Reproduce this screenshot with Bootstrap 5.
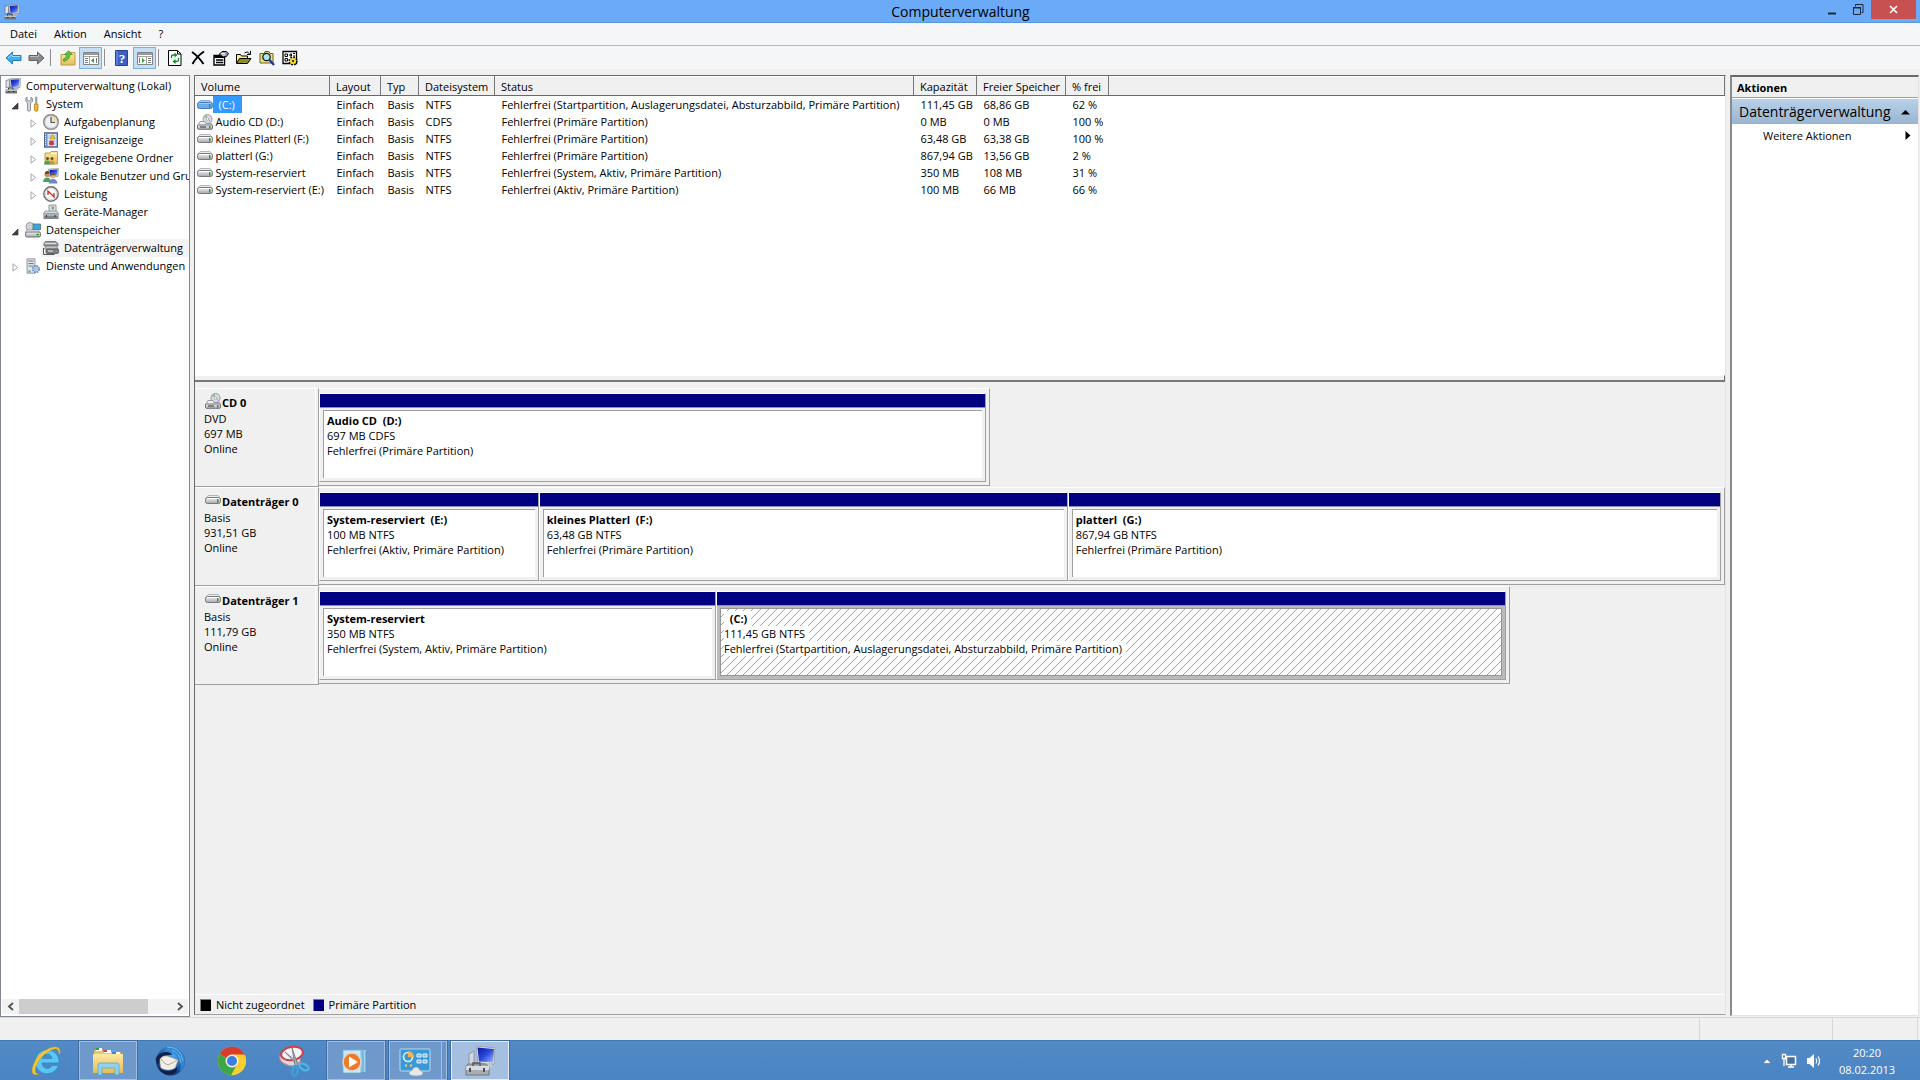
<!DOCTYPE html>
<html lang="de">
<head>
<meta charset="utf-8">
<meta name="viewport" content="width=device-width, initial-scale=1">
<title>Computerverwaltung</title>
<link href="https://cdn.jsdelivr.net/npm/bootstrap@5.3.0/dist/css/bootstrap.min.css" rel="stylesheet">
<style>
  body { font-family: "Open Sans", "Noto Sans", sans-serif; font-size: 11px; line-height: 15px; color: #000; background: #f0f0f0; }
  button { font: inherit; color: inherit; background: none; border: 0; padding: 0; }
  svg { display: block; flex: none; }
  .ico { width: 16px; height: 16px; }

  /* window frame */
  .title-bar { height: 23px; background: #6aaaf6; border-bottom: 1px solid #5a96dc; }
  .title-bar h1 { font-size: 14px; line-height: 23px; font-weight: 400; padding-left: 82px; }
  .win-btn { width: 26px; height: 19px; display: flex; align-items: center; justify-content: center; }
  .win-close { width: 45px; background: #c75050; }
  .menu-bar { height: 23px; background: #f5f6f7; border-bottom: 1px solid #b4b6b8; padding: 0 10px 2px; gap: 17px; }
  .tool-bar { height: 23px; background: #f5f6f7; padding-left: 2px; }
  .tool-btn { width: 23px; height: 22px; display: flex; align-items: center; justify-content: center; }
  .tool-on { background: #c4def5; border: 1px solid #7eb0dd; }
  .tool-sep { width: 8px; height: 20px; }
  .tool-sep::before { content: ""; display: block; width: 1px; height: 17px; margin-left: 2px; background: #8d8d8d; }
  .tool-sep-end { width: 7px; }

  .work { padding: 6px 1px 0 0; }
  .tree-pane { width: 190px; background: #fff; border: 1px solid #828790; }
  .mid-pane { margin: 0 0 2px 4px; border: 1px solid #696969; border-right-color: #e3e3e3; border-bottom-color: #a0a0a0; }
  .act-pane { width: 189px; margin: 0 0 1px 4px; background: #fff; border: 2px solid #8a8a8a; border-top-color: #696969; border-right: 1px solid #e3e3e3; border-bottom: 1px solid #e3e3e3; }

  /* tree */
  .tree-list { list-style: none; margin: 0; padding: 1px 0 0; }
  .tree-row { height: 18px; display: flex; align-items: center; white-space: nowrap; width: 100%; color: #000; text-decoration: none; }
  .tree-row .lbl { padding: 0 5px; line-height: 18px; }
  .tree-row .twist { width: 8px; height: 9px; margin: 2px 6px 0 10px; }
  .lv0 { padding-left: 4px; }
  .lv2 { padding-left: 18px; }
  .leaf { padding-left: 42px; }
  .tree-sel { background: linear-gradient(90deg, transparent 40px, #f3f3f3 40px); }
  .hscroll { height: 15px; margin: 0 1px 2px; background: #f2f2f2; }
  .hscroll button { width: 17px; display: flex; align-items: center; justify-content: center; }
  .hthumb { width: 129px; background: #cdcdcd; }

  /* volume list */
  .vol-area { height: 299px; background: #fff; }
  .vol-list { table-layout: fixed; width: 100%; margin: 0; color: #000; }
  .vol-list > :not(caption) > * > * { padding: 0 0 0 7px; border: 0; box-shadow: none; white-space: nowrap; background: none; line-height: 17px; height: 17px; color: #000; }
  .vol-list > thead > tr > th { height: 19px; line-height: 17px; font-weight: 400; background: #f0f0f0; border: 1px solid; border-color: #fff #787878 #696969 #fff; padding-left: 6px; }
  .vol-list > thead > tr > th:first-child { padding-left: 5px; }
  .vol-list > tbody > tr > td:first-child { padding-left: 1px; }
  .vname { display: flex; align-items: center; height: 17px; }
  .vname .lbl { padding-left: 3px; }
  .vname .picked { background: #3399ff; color: #fff; padding: 0 7px 0 6px; }
  .splitter { height: 7px; background: #f0f0f0; border-top: 1px solid #fff; border-bottom: 2px solid #787878; border-right: 1px solid #696969; }

  /* graphical disk view */
  .disk-view { padding-top: 6px; }
  .disk { height: 99px; }
  .disk-info { width: 124px; border-top: 1px solid #fff; border-right: 1px solid #a0a0a0; border-bottom: 1px solid #a0a0a0; padding: 5px 0 0 9px; box-shadow: inset -2px 0 #f0f0f0, inset -3px 0 #fff; }
  .disk-info strong, .part-box strong { font-weight: 700; white-space: pre; }
  .disk-info div { line-height: 15px; }
  .disk-name { display: flex; align-items: center; height: 17px; }
  .disk-name .ico { margin: 0 1px 4px; }
  .disk-parts { height: 98px; display: flex; border: solid; border-width: 1px 1px 1px 0; border-color: #fff #a0a0a0 #a0a0a0; padding: 4px 3px 3px 0; }
  .part { min-width: 0; flex-basis: 0; border: 1px solid; border-color: #fff #a0a0a0 #a0a0a0 #fff; display: flex; flex-direction: column; }
  .part-bar { height: 14px; background: #000080; border-bottom: 1px solid #8c8cc0; }
  .part-box { flex: 1; margin: 2px 3px 3px; background: #fff; border: solid; border-width: 1px 0 0 1px; border-color: #a0a0a0; padding: 2px 0 0 3px; position: relative; white-space: nowrap; overflow: hidden; }
  .part-box > div { line-height: 15px; }
  .part-sel { background: #bababa; }
  .part-sel .part-box { border-width: 1px; border-color: #969696; }
  .part-sel .part-box > div { position: relative; }
  .part-sel .part-box span { background: #fff; display: inline-block; height: 15px; padding-right: 4px; }
  .hatch { position: absolute; inset: 0; width: 100%; height: 100%; }
  .legend { height: 20px; border-top: 1px solid #fff; padding-left: 5px; }
  .swatch { width: 11px; height: 12px; margin-right: 5px; border: 1px solid #808080; border-right: 0; border-bottom: 0; }
  .sw-free { background: #000; }
  .sw-prim { background: #000080; }

  /* actions */
  .act-head { height: 21px; line-height: 21px; background: #f0f0f0; font-weight: 700; font-size: 11px; padding-left: 5px; border-bottom: 1px solid #a0a0a0; margin: 0; }
  .act-group { height: 25px; margin-top: 1px; font-size: 14px; padding: 0 8px 0 7px; background: linear-gradient(#b9d1ea, #99b4d1); }
  .act-item { height: 22px; padding: 0 7px 0 31px; }

  .status-bar { height: 23px; border-top: 1px solid #d7d7d7; padding-right: 2px; }
  .status-bar div { border-right: 1px solid #d7d7d7; }
  .stat-mid { width: 133px; }
  .stat-end { width: 85px; }

  /* taskbar */
  .task-bar { height: 40px; background: linear-gradient(#528ac7, #4a84c2); border-top: 1px solid #4479b4; padding-left: 17px; }
  .task-btn { width: 58px; height: 39px; display: flex; align-items: center; justify-content: center; border: 1px solid transparent; }
  .task-run { background: #7099cb; border-color: #a3bfe0; outline: 1px solid #3f6da3; }
  .task-act { background: #a4bfe0; border-color: #e3edf8; }
  .task-stack { box-shadow: inset -4px 0 #6a94c8, inset -5px 0 #a3bfe0; padding-right: 7px; }
  .tray { color: #fff; padding-right: 23px; gap: 9px; }
  .clock { line-height: 17px; text-align: center; width: 60px; margin-left: 6px; }
</style>
<script src="https://cdn.jsdelivr.net/npm/bootstrap@5.3.0/dist/js/bootstrap.bundle.min.js"></script>
</head>
<body class="vh-100 d-flex flex-column overflow-hidden">

<svg width="0" height="0" class="position-absolute" aria-hidden="true">
  <defs>
    <linearGradient id="gScr" x1="0" y1="0" x2="1" y2="1"><stop offset="0" stop-color="#0a1a9c"/><stop offset=".5" stop-color="#2a49dc"/><stop offset="1" stop-color="#a6bdf6"/></linearGradient>
    <linearGradient id="gGrey" x1="0" y1="0" x2="0" y2="1"><stop offset="0" stop-color="#f4f4f6"/><stop offset="1" stop-color="#a5a7ad"/></linearGradient>
    <linearGradient id="gFold" x1="0" y1="0" x2="0" y2="1"><stop offset="0" stop-color="#fbe9a4"/><stop offset="1" stop-color="#e5bc56"/></linearGradient>
    <radialGradient id="gBird" cx=".6" cy=".25" r=".8"><stop offset="0" stop-color="#4fb0ee"/><stop offset=".6" stop-color="#1e5fae"/><stop offset="1" stop-color="#122b62"/></radialGradient>
    <pattern id="hatchP" width="8" height="8" patternUnits="userSpaceOnUse"><path d="M0 7h1v1H0zM1 6h1v1H1zM2 5h1v1H2zM3 4h1v1H3zM4 3h1v1H4zM5 2h1v1H5zM6 1h1v1H6zM7 0h1v1H7z" fill="#a0a0a0" shape-rendering="crispEdges"/></pattern>
  </defs>
  <symbol id="i-comp" viewBox="0 0 16 16">
    <path d="M1 2.500 4.500 1.500V9L1 10z" fill="#dfe1e5" stroke="#6e737b" stroke-width=".7"/>
    <path d="M4.500.8l11-.5L15 9.500 5.500 10z" fill="#e4e6ea" stroke="#777" stroke-width=".6"/>
    <path d="M5.700 1.800l8.600-.5-.4 7.200L6.500 9z" fill="url(#gScr)"/>
    <path d="M8 10h5l1.500 1.500H9z" fill="#b2b5ba"/>
    <path d="M.5 11.500h11.500V15.500H.5z" fill="#6f757d"/><path d="M.5 11.500h11.500V13H.5z" fill="#c0c5ca"/><path d="M3.500 11.500v-1.500h4.500v1.500M3 13.500h1.500M8 13.500h1.500" fill="none" stroke="#30353b"/>
  </symbol>
  <symbol id="i-drive" viewBox="0 0 16 16">
    <path d="M3 3.500h10l2.500 3.500H.5z" fill="#ececee" stroke="#9d9ea3" stroke-width=".7"/>
    <rect x=".5" y="5.500" width="15" height="6" rx="2" fill="url(#gGrey)" stroke="#77797f"/>
    <path d="M2 6.500h12" stroke="#fff"/>
    <rect x="12" y="7" width="1.500" height="3.500" fill="#2f9a2f"/>
  </symbol>
  <symbol id="i-drivesel" viewBox="0 0 16 16">
    <path d="M3 3.500h10l2.500 3.500H.5z" fill="#9cc8f5" stroke="#6a9fd6" stroke-width=".7"/>
    <rect x=".5" y="5.500" width="15" height="6" rx="2" fill="#6fabe8" stroke="#447db9"/>
    <path d="M2 6.500h12" stroke="#a5cffa"/>
    <rect x="12" y="7" width="1.500" height="3.500" fill="#2d7f9d"/>
  </symbol>
  <symbol id="i-cd" viewBox="0 0 16 16">
    <circle cx="10.500" cy="5" r="4.500" fill="#dcdde2" stroke="#85868c" stroke-width=".8"/><circle cx="10.500" cy="5" r="1.300" fill="#fff" stroke="#888" stroke-width=".6"/>
    <path d="M7 3.500a4 4 0 0 1 2.500-2.500l.6 2.300z" fill="#6cbf6c"/><path d="M12 6l2 2" stroke="#c08fd0"/>
    <path d="M3 7.500h5l1 2h5.500l1 2.500H.5z" fill="#f0f0f2" stroke="#85868c" stroke-width=".8"/>
    <rect x=".5" y="11" width="15" height="4.300" rx="1" fill="url(#gGrey)" stroke="#6f7177"/><path d="M3 13h6" stroke="#333"/><rect x="12" y="12" width="1.500" height="2.500" fill="#2f9a2f"/>
  </symbol>
  <symbol id="i-tools" viewBox="0 0 16 16">
    <path d="M2 1v3l2 1 2-1V1l1.500 1.500v3L5.500 7v7.500q-1.500 1.500-3 0V7L.8 5.500v-3z" fill="#d2d5da" stroke="#777b83" stroke-width=".8"/>
    <path d="M10.500 1h1.500v6.500h-1.500z" fill="#a9adb5" stroke="#777b83" stroke-width=".5"/><path d="M9.500 8h3.500v6.500q-1.700 1.800-3.500 0z" fill="#f1b52b" stroke="#b07f15" stroke-width=".7"/>
  </symbol>
  <symbol id="i-clock" viewBox="0 0 16 16">
    <circle cx="8" cy="8" r="7.300" fill="#eef1f6" stroke="#8a8377" stroke-width="1.400"/><path d="M8 8V2a6 6 0 0 1 6 6z" fill="#f6dd9b"/><path d="M8 3v5.500h4" fill="none" stroke="#43536d" stroke-width="1.200"/><circle cx="8" cy="8" r="6" fill="none" stroke="#bfc3cb" stroke-width=".6"/>
  </symbol>
  <symbol id="i-event" viewBox="0 0 16 16">
    <rect x="1.500" y=".8" width="13" height="14.400" fill="#6c8fc4" stroke="#54648a"/><rect x="4.500" y="2" width="9" height="12" fill="#dfe9f7"/><path d="M2.500 2v12" stroke="#e8eefa" stroke-dasharray="1 1"/><path d="M5.500 4h7M5.500 6h7M5.500 9h7M5.500 12h7" stroke="#93a9cc"/><path d="M9.500 2.500l2.700 4.500H7z" fill="#f3c623" stroke="#a8820c" stroke-width=".5"/><circle cx="8.500" cy="11" r="2.500" fill="#d33a35"/>
  </symbol>
  <symbol id="i-share" viewBox="0 0 16 16">
    <path d="M2 3h5l1-1.500h6.500V14H2z" fill="url(#gFold)" stroke="#b18d36" stroke-width=".8"/><path d="M8 3.500h6" stroke="#fff"/><circle cx="4.500" cy="8.500" r="1.500" fill="#6b4d24"/><circle cx="9" cy="8.500" r="1.500" fill="#6b4d24"/><path d="M1 14.500q.5-4 3.500-4t3 4z" fill="#4aa35c"/><path d="M6.500 14.500q.3-4 2.500-4t2.500 4z" fill="#b99a4c"/>
  </symbol>
  <symbol id="i-users" viewBox="0 0 16 16">
    <path d="M5.500 1l10-.5-.5 8-9 .5z" fill="#d5d8de" stroke="#777" stroke-width=".5"/><path d="M6.500 2l8-.5-.4 6-7.200.5z" fill="url(#gScr)"/><circle cx="4" cy="6.500" r="2.500" fill="#c98d58"/><path d="M1.800 6q0-3 2.500-3t2 2.500z" fill="#5f4322"/><path d="M0 14q.5-4.500 4-4.500t4 4.500z" fill="#4f9f62"/><circle cx="10" cy="8" r="2.500" fill="#e2b184"/><path d="M7.700 7.500q0-3 2.500-3t2.300 2.700z" fill="#7c5a2b"/><path d="M5.500 15.500q.5-4.500 4.500-4.500t4.500 4.500z" fill="#6a89bd"/>
  </symbol>
  <symbol id="i-perf" viewBox="0 0 16 16">
    <circle cx="8" cy="8" r="7.200" fill="#fff" stroke="#6b6b6b" stroke-width="1.400"/><circle cx="8" cy="8" r="5.600" fill="none" stroke="#c3c3c3" stroke-width=".7"/><path d="M5 9V5l6 6V7" fill="none" stroke="#c92a22" stroke-width="1.300"/>
  </symbol>
  <symbol id="i-dev" viewBox="0 0 16 16">
    <path d="M6 1h7v7H6z" fill="#dfe3e4" stroke="#7c8285" stroke-width=".8"/><path d="M8.500 2.500H11v3H8.500z" fill="#75a888"/><path d="M2 7h12l1.500 2.500H.5z" fill="#d5d8dc" stroke="#6f757c" stroke-width=".6"/><path d="M.5 9.500h15V15H.5z" fill="#7e858c"/><path d="M.5 9.500h15V12H.5z" fill="#aab0b6"/><path d="M3.500 11v2M12 11v2" stroke="#2d3237"/>
  </symbol>
  <symbol id="i-store" viewBox="0 0 16 16">
    <circle cx="5" cy="4.500" r="4" fill="#d7d9df" stroke="#85878d" stroke-width=".8"/><circle cx="5" cy="4.500" r="1.200" fill="#fff" stroke="#888" stroke-width=".5"/><path d="M8 2h7.500v5.500H8z" fill="#35a7e6" stroke="#5d6870" stroke-width=".8"/><path d="M1.500 8h12l2 2.500H0z" fill="#eee" stroke="#888" stroke-width=".6"/><rect x=".5" y="10" width="15" height="5" rx="1.500" fill="url(#gGrey)" stroke="#6f7177"/><path d="M11.500 12.500H14" stroke="#2f9a2f" stroke-width="1.500"/>
  </symbol>
  <symbol id="i-disk" viewBox="0 0 16 16">
    <path d="M2.500 1.500h10l2.500 2v2.500H1V3.500z" fill="#9b9d9f" stroke="#5a5c5e" stroke-width=".7"/><path d="M2 3.500h11" stroke="#dcdcdc"/><path d="M3 6h10.500l1.500 3H1.500z" fill="#c4c5c6" stroke="#66686a" stroke-width=".6"/><rect x="3" y="9" width="12.500" height="4.500" rx="1" fill="#7b7d7f" stroke="#48494b" stroke-width=".7"/><path d="M5 11h5" stroke="#f0f0f0"/><path d="M.5 8v6.500h11" fill="none" stroke="#55575a"/><path d="M12.500 11.500H14" stroke="#57c257"/>
  </symbol>
  <symbol id="i-serv" viewBox="0 0 16 16">
    <path d="M2 .8h8v14.400H2z" fill="#dfe3e8" stroke="#7d8792" stroke-width=".8"/><path d="M3.500 3h5M3.500 5.500h5M3.500 8h5" stroke="#6f7d8b"/><circle cx="11" cy="11" r="3.300" fill="#b9d2ec" stroke="#5d87b3" stroke-width="1.400" stroke-dasharray="1.700 .9"/><circle cx="11" cy="11" r="1.200" fill="#fff" stroke="#5d87b3" stroke-width=".6"/><path d="M3.500 12.500h2v2h-2z" fill="#4db04d"/>
  </symbol>
  <symbol id="t-open" viewBox="0 0 8 9"><path d="M7 2v6H1z" fill="#404040" stroke="#262626" stroke-width=".6"/></symbol>
  <symbol id="t-shut" viewBox="0 0 8 9"><path d="M2 .8 6.500 4.500 2 8.200z" fill="#fff" stroke="#a6a6a6"/></symbol>
</svg>

<header class="title-bar d-flex align-items-start">
  <svg class="ico mt-1 ms-1"><use href="#i-comp"/></svg>
  <h1 class="flex-grow-1 text-center mb-0">Computerverwaltung</h1>
  <button class="win-btn" aria-label="Minimieren"><svg width="10" height="10"><path d="M1 8.500h8" stroke="#1b2a3d" stroke-width="2"/></svg></button>
  <button class="win-btn" aria-label="Verkleinern"><svg width="12" height="12"><path d="M1.500 4h7v6.500h-7z" fill="none" stroke="#1b2a3d"/><path d="M1 3.500h8M3.500 2.500V.5h7.500v8H9.500" fill="none" stroke="#1b2a3d"/></svg></button>
  <button class="win-btn win-close me-1" aria-label="Schließen"><svg width="9" height="9"><path d="M1 1l7 7M8 1L1 8" stroke="#fff" stroke-width="1.700"/></svg></button>
</header>

<nav class="menu-bar d-flex align-items-center" aria-label="Menü">
  <button>Datei</button><button>Aktion</button><button>Ansicht</button><button>?</button>
</nav>

<div class="tool-bar d-flex align-items-end" role="toolbar">
  <button class="tool-btn" aria-label="Zurück"><svg width="17" height="14"><path d="M1 7l6.500-6v3.500h8.500v5H7.500V13z" fill="#3db0ee" stroke="#2579b5"/><path d="M3 7l4-3.500v2h8" fill="none" stroke="#9adcfb"/></svg></button>
  <button class="tool-btn" aria-label="Vorwärts"><svg width="17" height="14"><path d="M16 7L9.500 1v3.500H1v5h8.500V13z" fill="#8b8b8b" stroke="#616161"/><path d="M2 5.500h8.500v-2" fill="none" stroke="#bbb"/></svg></button>
  <span class="tool-sep"></span>
  <button class="tool-btn" aria-label="Eine Ebene nach oben"><svg class="ico" viewBox="0 0 16 16"><path d="M1 4.500h6l1-2h7V15H1z" fill="url(#gFold)" stroke="#c39c43"/><path d="M3 9.500q3.500-1 3.500-5H4.500L8.500.8l4 3.700h-2.500q0 5-6 7z" fill="#5cc03c" stroke="#35861d" stroke-width=".6"/></svg></button>
  <button class="tool-btn tool-on" aria-label="Konsolenstruktur"><svg class="ico" viewBox="0 0 16 16"><path d="M.5 2.500h15v12H.5z" fill="#fff" stroke="#858585"/><path d="M1 3h14v2H1z" fill="#9a9a9a"/><path d="M6.500 6v8M1 6.500h14" stroke="#a5a5a5"/><path d="M2 8.500h3M2 10.500h3M2 12.500h3M13.500 8v5" stroke="#777"/><path d="M11 8v5L8 10.500z" fill="#34a534"/></svg></button>
  <span class="tool-sep"></span>
  <button class="tool-btn" aria-label="Hilfe"><svg class="ico" viewBox="0 0 16 16"><path d="M1.500.5h12v15h-12z" fill="#3d5fc4" stroke="#27418f"/><path d="M3 1v14" stroke="#7f9be6"/><text x="8" y="12.500" font-size="13" font-weight="700" text-anchor="middle" fill="#fff" font-family="Liberation Serif, serif">?</text></svg></button>
  <button class="tool-btn tool-on" aria-label="Aktionsbereich"><svg class="ico" viewBox="0 0 16 16"><path d="M.5 2.500h15v12H.5z" fill="#fff" stroke="#858585"/><path d="M1 3h14v2H1z" fill="#9a9a9a"/><path d="M9.500 6v8M1 6.500h14" stroke="#a5a5a5"/><path d="M11 8.500h3M11 10.500h3M11 12.500h3M2.500 8v5" stroke="#777"/><path d="M5 8v5l3-2.500z" fill="#34a534"/></svg></button>
  <span class="tool-sep tool-sep-end"></span>
  <button class="tool-btn" aria-label="Aktualisieren"><svg class="ico" viewBox="0 0 16 16"><path d="M1.500.5h9l3.500 3.500v11.500h-12.500z" fill="#fff" stroke="#000"/><path d="M10.500.5V4h3.500" fill="none" stroke="#000"/><path d="M4.500 8V6.500q0-1.500 2-1.500H8M11.500 8v2q0 1.500-2 1.500H8" fill="none" stroke="#0a8a20" stroke-width="1.300"/><path d="M7.500 2.500v5L10.500 5zM8.500 9v5l-3-2.500z" fill="#0a8a20"/></svg></button>
  <button class="tool-btn" aria-label="Löschen"><svg class="ico" viewBox="0 0 16 16"><path d="M2 2q6 4 11.500 12M14 1.500Q7 6 2.500 14" fill="none" stroke="#000" stroke-width="1.900"/></svg></button>
  <button class="tool-btn" aria-label="Eigenschaften"><svg class="ico" viewBox="0 0 16 16"><path d="M1 5.500h10.500V15H1z" fill="#fff" stroke="#000" stroke-width="1.400"/><path d="M1.500 6h10v2h-10z"/><path d="M3 10h7M3 12.500h7" stroke="#000" stroke-width="1.300"/><path d="M6 4.500l3-3h4l2.500 2-2 3-3 .5z" fill="#9a9ab8" stroke="#000"/><path d="M8 3.500h4M9 5h3" stroke="#fff" stroke-width=".8"/></svg></button>
  <button class="tool-btn" aria-label="Öffnen"><svg class="ico" viewBox="0 0 16 16"><path d="M.5 13V4.500h4l1 1.500h6v2.500" fill="#f7f08a" stroke="#000"/><path d="M.5 13.500l3-5H15l-3.500 5z" fill="#8f8a26" stroke="#000"/><path d="M8.500 3q2.500-2.500 5 .5M14.500 1v3.500H11" fill="none" stroke="#000"/></svg></button>
  <button class="tool-btn" aria-label="Suchen"><svg class="ico" viewBox="0 0 16 16"><path d="M1 13V3.500h4l1-2h4l1 2h3V13z" fill="#e9dc8b" stroke="#6d671c"/><circle cx="7.500" cy="7" r="3.700" fill="#a9e6ee" stroke="#111" stroke-width="1.200"/><path d="M10.500 10l4.500 5" stroke="#1c2e98" stroke-width="2.200"/></svg></button>
  <button class="tool-btn" aria-label="Einstellungen"><svg class="ico" viewBox="0 0 16 16"><path d="M1 1.500h13.500v12H1z" fill="#fff" stroke="#000" stroke-width="1.300"/><path d="M3 4h2.500v2.500H3zM3 8.500h2.500V11H3zM8 4h1.500v2H8z" fill="none" stroke="#000"/><path d="M11 3.500h2M11 6h2" stroke="#000"/><circle cx="11" cy="11" r="3.600" fill="#f3dc35" stroke="#000" stroke-width="2" stroke-dasharray="1.600 1.200"/><circle cx="11" cy="11" r="3" fill="#f3dc35"/><circle cx="11" cy="11" r="1"/></svg></button>
</div>

<main class="work d-flex flex-grow-1">
  <aside class="tree-pane d-flex flex-column flex-shrink-0 overflow-hidden">
    <ul class="tree-list flex-grow-1">
      <li><a href="#" class="tree-row lv0"><svg class="ico"><use href="#i-comp"/></svg><span class="lbl">Computerverwaltung (Lokal)</span></a></li>
      <li><a href="#" class="tree-row"><svg class="twist"><use href="#t-open"/></svg><svg class="ico"><use href="#i-tools"/></svg><span class="lbl">System</span></a></li>
      <li><a href="#" class="tree-row lv2"><svg class="twist"><use href="#t-shut"/></svg><svg class="ico"><use href="#i-clock"/></svg><span class="lbl">Aufgabenplanung</span></a></li>
      <li><a href="#" class="tree-row lv2"><svg class="twist"><use href="#t-shut"/></svg><svg class="ico"><use href="#i-event"/></svg><span class="lbl">Ereignisanzeige</span></a></li>
      <li><a href="#" class="tree-row lv2"><svg class="twist"><use href="#t-shut"/></svg><svg class="ico"><use href="#i-share"/></svg><span class="lbl">Freigegebene Ordner</span></a></li>
      <li><a href="#" class="tree-row lv2"><svg class="twist"><use href="#t-shut"/></svg><svg class="ico"><use href="#i-users"/></svg><span class="lbl">Lokale Benutzer und Gruppen</span></a></li>
      <li><a href="#" class="tree-row lv2"><svg class="twist"><use href="#t-shut"/></svg><svg class="ico"><use href="#i-perf"/></svg><span class="lbl">Leistung</span></a></li>
      <li><a href="#" class="tree-row leaf"><svg class="ico"><use href="#i-dev"/></svg><span class="lbl">Geräte-Manager</span></a></li>
      <li><a href="#" class="tree-row"><svg class="twist"><use href="#t-open"/></svg><svg class="ico"><use href="#i-store"/></svg><span class="lbl">Datenspeicher</span></a></li>
      <li><a href="#" class="tree-row leaf tree-sel"><svg class="ico"><use href="#i-disk"/></svg><span class="lbl">Datenträgerverwaltung</span></a></li>
      <li><a href="#" class="tree-row"><svg class="twist"><use href="#t-shut"/></svg><svg class="ico"><use href="#i-serv"/></svg><span class="lbl">Dienste und Anwendungen</span></a></li>
    </ul>
    <div class="hscroll d-flex">
      <button aria-label="Nach links"><svg width="8" height="9"><path d="M6 1L2 4.500 6 8" fill="none" stroke="#505050" stroke-width="1.800"/></svg></button>
      <div class="hthumb"></div>
      <button class="ms-auto" aria-label="Nach rechts"><svg width="8" height="9"><path d="M2 1l4 3.500L2 8" fill="none" stroke="#505050" stroke-width="1.800"/></svg></button>
    </div>
  </aside>

  <section class="mid-pane flex-grow-1 d-flex flex-column">
    <div class="vol-area">
      <table class="table vol-list">
        <colgroup><col style="width:134px"><col style="width:51px"><col style="width:38px"><col style="width:76px"><col style="width:419px"><col style="width:63px"><col style="width:89px"><col style="width:43px"><col></colgroup>
        <thead><tr><th>Volume</th><th>Layout</th><th>Typ</th><th>Dateisystem</th><th>Status</th><th>Kapazität</th><th>Freier Speicher</th><th>% frei</th><th></th></tr></thead>
        <tbody>
          <tr><td><div class="vname"><svg class="ico"><use href="#i-drivesel"/></svg><span class="picked">(C:)</span></div></td><td>Einfach</td><td>Basis</td><td>NTFS</td><td>Fehlerfrei (Startpartition, Auslagerungsdatei, Absturzabbild, Primäre Partition)</td><td>111,45 GB</td><td>68,86 GB</td><td>62 %</td><td></td></tr>
          <tr><td><div class="vname"><svg class="ico"><use href="#i-cd"/></svg><span class="lbl">Audio CD (D:)</span></div></td><td>Einfach</td><td>Basis</td><td>CDFS</td><td>Fehlerfrei (Primäre Partition)</td><td>0 MB</td><td>0 MB</td><td>100 %</td><td></td></tr>
          <tr><td><div class="vname"><svg class="ico"><use href="#i-drive"/></svg><span class="lbl">kleines Platterl (F:)</span></div></td><td>Einfach</td><td>Basis</td><td>NTFS</td><td>Fehlerfrei (Primäre Partition)</td><td>63,48 GB</td><td>63,38 GB</td><td>100 %</td><td></td></tr>
          <tr><td><div class="vname"><svg class="ico"><use href="#i-drive"/></svg><span class="lbl">platterl (G:)</span></div></td><td>Einfach</td><td>Basis</td><td>NTFS</td><td>Fehlerfrei (Primäre Partition)</td><td>867,94 GB</td><td>13,56 GB</td><td>2 %</td><td></td></tr>
          <tr><td><div class="vname"><svg class="ico"><use href="#i-drive"/></svg><span class="lbl">System-reserviert</span></div></td><td>Einfach</td><td>Basis</td><td>NTFS</td><td>Fehlerfrei (System, Aktiv, Primäre Partition)</td><td>350 MB</td><td>108 MB</td><td>31 %</td><td></td></tr>
          <tr><td><div class="vname"><svg class="ico"><use href="#i-drive"/></svg><span class="lbl">System-reserviert (E:)</span></div></td><td>Einfach</td><td>Basis</td><td>NTFS</td><td>Fehlerfrei (Aktiv, Primäre Partition)</td><td>100 MB</td><td>66 MB</td><td>66 %</td><td></td></tr>
        </tbody>
      </table>
    </div>
    <div class="splitter"></div>
    <div class="disk-view flex-grow-1">
      <div class="disk d-flex">
        <div class="disk-info flex-shrink-0"><div class="disk-name"><svg class="ico"><use href="#i-cd"/></svg><strong>CD 0</strong></div><div>DVD</div><div>697 MB</div><div>Online</div></div>
        <div class="flex-grow-1"><div class="disk-parts" style="width:47.7%">
          <div class="part" style="flex-grow:1"><div class="part-bar"></div><div class="part-box"><div><strong>Audio CD  (D:)</strong></div><div>697 MB CDFS</div><div>Fehlerfrei (Primäre Partition)</div></div></div>
        </div></div>
      </div>
      <div class="disk d-flex">
        <div class="disk-info flex-shrink-0"><div class="disk-name"><svg class="ico"><use href="#i-drive"/></svg><strong>Datenträger 0</strong></div><div>Basis</div><div>931,51 GB</div><div>Online</div></div>
        <div class="flex-grow-1"><div class="disk-parts" style="width:100%">
          <div class="part" style="flex-grow:219"><div class="part-bar"></div><div class="part-box"><div><strong>System-reserviert  (E:)</strong></div><div>100 MB NTFS</div><div>Fehlerfrei (Aktiv, Primäre Partition)</div></div></div>
          <div class="part" style="flex-grow:530"><div class="part-bar"></div><div class="part-box"><div><strong>kleines Platterl  (F:)</strong></div><div>63,48 GB NTFS</div><div>Fehlerfrei (Primäre Partition)</div></div></div>
          <div class="part" style="flex-grow:655"><div class="part-bar"></div><div class="part-box"><div><strong>platterl  (G:)</strong></div><div>867,94 GB NTFS</div><div>Fehlerfrei (Primäre Partition)</div></div></div>
        </div></div>
      </div>
      <div class="disk d-flex">
        <div class="disk-info flex-shrink-0"><div class="disk-name"><svg class="ico"><use href="#i-drive"/></svg><strong>Datenträger 1</strong></div><div>Basis</div><div>111,79 GB</div><div>Online</div></div>
        <div class="flex-grow-1"><div class="disk-parts" style="width:84.7%">
          <div class="part" style="flex-grow:396"><div class="part-bar"></div><div class="part-box"><div><strong>System-reserviert</strong></div><div>350 MB NTFS</div><div>Fehlerfrei (System, Aktiv, Primäre Partition)</div></div></div>
          <div class="part part-sel" style="flex-grow:790"><div class="part-bar"></div><div class="part-box"><svg class="hatch" aria-hidden="true"><rect width="100%" height="100%" fill="url(#hatchP)"/></svg><div><span><strong>  (C:)</strong></span></div><div><span>111,45 GB NTFS</span></div><div><span>Fehlerfrei (Startpartition, Auslagerungsdatei, Absturzabbild, Primäre Partition)</span></div></div></div>
        </div></div>
      </div>
    </div>
    <div class="legend d-flex align-items-center">
      <span class="swatch sw-free"></span><span>Nicht zugeordnet</span>
      <span class="swatch sw-prim ms-2"></span><span>Primäre Partition</span>
    </div>
  </section>

  <aside class="act-pane flex-shrink-0">
    <h2 class="act-head">Aktionen</h2>
    <button class="act-group w-100 d-flex align-items-center justify-content-between">Datenträgerverwaltung<svg width="9" height="6"><path d="M0 5.500L4.500 1 9 5.500z"/></svg></button>
    <button class="act-item w-100 d-flex align-items-center justify-content-between">Weitere Aktionen<svg width="6" height="9"><path d="M.5 0v9L5.500 4.500z"/></svg></button>
  </aside>
</main>

<footer class="status-bar d-flex"><div class="flex-grow-1"></div><div class="stat-mid"></div><div class="stat-end"></div></footer>

<div class="task-bar d-flex align-items-center gap-1">
  <button class="task-btn" aria-label="Internet Explorer"><svg width="32" height="32" viewBox="0 0 32 32"><path d="M28.500 20.500A12 12 0 1 1 29 15v3H12q1 5.500 5.500 5.500 3 0 4.500-3zM12.200 13.500H22q-.8-4.300-4.800-4.300t-5 4.300z" fill="#5ac6f2" stroke="#2a86c8" stroke-width=".7" fill-rule="evenodd"/><path d="M30 8.500Q31-.5 20 3 7 8 3 21-.2 32 9 29 3.500 29.500 6 21 10 11 20 5.500 29 1 29 8.500z" fill="#f5c92e" stroke="#d69f14" stroke-width=".5"/></svg></button>
  <button class="task-btn task-run" aria-label="Explorer"><svg width="32" height="32" viewBox="0 0 32 32"><path d="M2 5h8l1.500 2H29v20H2z" fill="#e8c867" stroke="#c49f3f" stroke-width=".6"/><path d="M4 3h6v3H4zM12 5h7v3h-7zM20 7h8v3h-8z" fill="#fff"/><path d="M4 3h3v2H4z" fill="#2ca02c"/><path d="M12 5h3v2h-3z" fill="#d2442e"/><path d="M20 7h4v2h-4z" fill="#2a8fd6"/><path d="M1 9h30v19H1z" fill="url(#gFold)"/><path d="M6 30V20q0-2 2-2h17q2 0 2 2v10h-4v-7H10v7z" fill="#8fd3ef" stroke="#4ba3cc" stroke-width=".7"/></svg></button>
  <button class="task-btn" aria-label="Thunderbird"><svg width="32" height="32" viewBox="0 0 32 32"><circle cx="16.500" cy="16" r="14.500" fill="url(#gBird)"/><path d="M9 4q6-3 11-1 9 3 10.500 12 .5 8-5 12 3-8-1-14-5-7-14-6 5-3 8-1-4-4-9.500-2z" fill="#2f86d3"/><path d="M13 2q14 0 16 14M18 5q8 3 9 13" fill="none" stroke="#7fc3f2" stroke-width=".8"/><path d="M1.500 14q3-7 11-7 4 0 6 3-6-1-9.500 2.500T5 20q-3-2-3.500-6z" fill="#11224c"/><path d="M6 14q3-4 7-3l11 4-3 8q-7 4-14 0-1.500-5-1-9z" fill="#f3efe4" stroke="#b8b09c" stroke-width=".6"/><path d="M7 14q3 5 7 6 5-2 9-5" fill="none" stroke="#9d967f" stroke-width=".8"/><path d="M3 19q2 6 8 7 8 1 12-4 1 5-4 7-12 3-16-10z" fill="#0f1f44"/></svg></button>
  <button class="task-btn" aria-label="Chrome"><svg width="30" height="30" viewBox="0 0 30 30"><circle cx="15" cy="15" r="14.200" fill="#f8cf30"/><path d="M15 15L2.700 7.900A14.200 14.200 0 0 1 27.700 8.600H15z" fill="#dc3b2c"/><path d="M2.700 7.900A14.200 14.200 0 0 0 14 29.200l6-10.700-5-3.500z" fill="#3fa648"/><circle cx="15" cy="15" r="6.500" fill="#f3f3f3"/><circle cx="15" cy="15" r="5" fill="#3b7de0"/></svg></button>
  <button class="task-btn" aria-label="Snipping Tool"><svg width="32" height="32" viewBox="0 0 32 32"><ellipse cx="12" cy="14" rx="10.500" ry="6.500" transform="rotate(14 12 14)" fill="#d9dbe2" stroke="#c98f97" stroke-width="1.200"/><ellipse cx="14" cy="8.500" rx="11" ry="6.500" transform="rotate(-10 14 8.500)" fill="#f3f4f7" stroke="#d03f49" stroke-width="2"/><path d="M7 7l16 13-3 1z" fill="#c6cad0" stroke="#6d737b" stroke-width=".8"/><path d="M14 3l6 17-3 1z" fill="#aab0b7" stroke="#6d737b" stroke-width=".8"/><ellipse cx="26" cy="22" rx="5" ry="2.800" transform="rotate(30 26 22)" fill="none" stroke="#4db5e8" stroke-width="2.200"/><ellipse cx="17" cy="26" rx="2.600" ry="4.600" transform="rotate(12 17 26)" fill="none" stroke="#3aa2da" stroke-width="2.200"/></svg></button>
  <button class="task-btn task-run" aria-label="Media Player"><svg width="32" height="30" viewBox="0 0 32 30"><path d="M5 4h21v22H5z" fill="#a5d3ee"/><path d="M26 5v21M23 4v22" stroke="#4e9fd0"/><path d="M3 4h18v23H3z" fill="#cde7f6" stroke="#66acd6" stroke-width=".8"/><circle cx="12" cy="16" r="9" fill="#ee7a25" stroke="#d8d8d8" stroke-width="1.500"/><path d="M9 10.500v11l9-5.500z" fill="#fff"/></svg></button>
  <button class="task-btn task-run task-stack" aria-label="Systemsteuerung"><svg width="32" height="32" viewBox="0 0 32 32"><rect x="1" y="4" width="30" height="22" rx="1" fill="#3b97d6" stroke="#b3dcf5"/><circle cx="9" cy="12" r="4.500" fill="none" stroke="#d9effb" stroke-width="1.700"/><path d="M9 12V6a6 6 0 0 1 6 6z" fill="#f3b44b"/><path d="M18 9h4v3h-4zM24 9h4v3h-4zM18 15h4v3h-4zM24 15h4v3h-4z" fill="#74c0ef" stroke="#e4f4fd"/><circle cx="7" cy="20.500" r="1.200" fill="#f0c95c"/><circle cx="12" cy="20.500" r="1.200" fill="#f0c95c"/><path d="M10 28q0-2 3-2.500Q14 22 17 22t4 3.500q3 .5 3 2.500 0 3-7 3t-7-3z" fill="#e3e6ea" stroke="#9a9ea5" stroke-width=".6"/></svg></button>
  <button class="task-btn task-run task-act" aria-label="Computerverwaltung"><svg width="32" height="32" viewBox="0 0 32 32"><path d="M5 9l5-3v18l-5-3z" fill="#d3d6da" stroke="#7e838a" stroke-width=".7"/><path d="M12 1l19 2-1 16-16-1z" fill="#dfe2e6" stroke="#90959c" stroke-width=".7"/><path d="M13.500 2.500l16.500 1.500-1 13.500-14-1z" fill="url(#gScr)"/><path d="M20 18h6l4 4-6 1z" fill="#c3c6ca"/><path d="M2 21l2-2h18l3 3v8H2z" fill="#a8adb3" stroke="#656a70" stroke-width=".8"/><path d="M2 21h23v4H2z" fill="#d7dade"/><path d="M9 21v-3h7v3" fill="none" stroke="#555a60" stroke-width="1.500"/><path d="M6 23v4M20 23v4" stroke="#4a4f55" stroke-width="2"/></svg></button>
  <div class="tray ms-auto d-flex align-items-center">
    <button aria-label="Ausgeblendete Symbole"><svg width="10" height="6"><path d="M1 5.500L5 1l4 4.500z" fill="#fff" stroke="#2f5b8e" stroke-width=".5"/></svg></button>
    <button aria-label="Netzwerk"><svg width="16" height="16"><path d="M5.500 3.500h9v8h-9zM7 14h6M10 12v2" fill="#44709f" stroke="#fff" stroke-width="1.500"/><path d="M1.500 1.500h3v4h-3zM3 6v7" fill="#44709f" stroke="#fff" stroke-width="1.300"/></svg></button>
    <button aria-label="Lautsprecher"><svg width="16" height="16"><path d="M1 5h2.500L8 1v14l-4.500-4H1z" fill="#fff"/><path d="M10 5.500q1.500 2.500 0 5M12 3.500q3 4.500 0 9" fill="none" stroke="#fff" stroke-width="1.200"/></svg></button>
    <div class="clock"><div>20:20</div><div>08.02.2013</div></div>
  </div>
</div>
</body>
</html>
